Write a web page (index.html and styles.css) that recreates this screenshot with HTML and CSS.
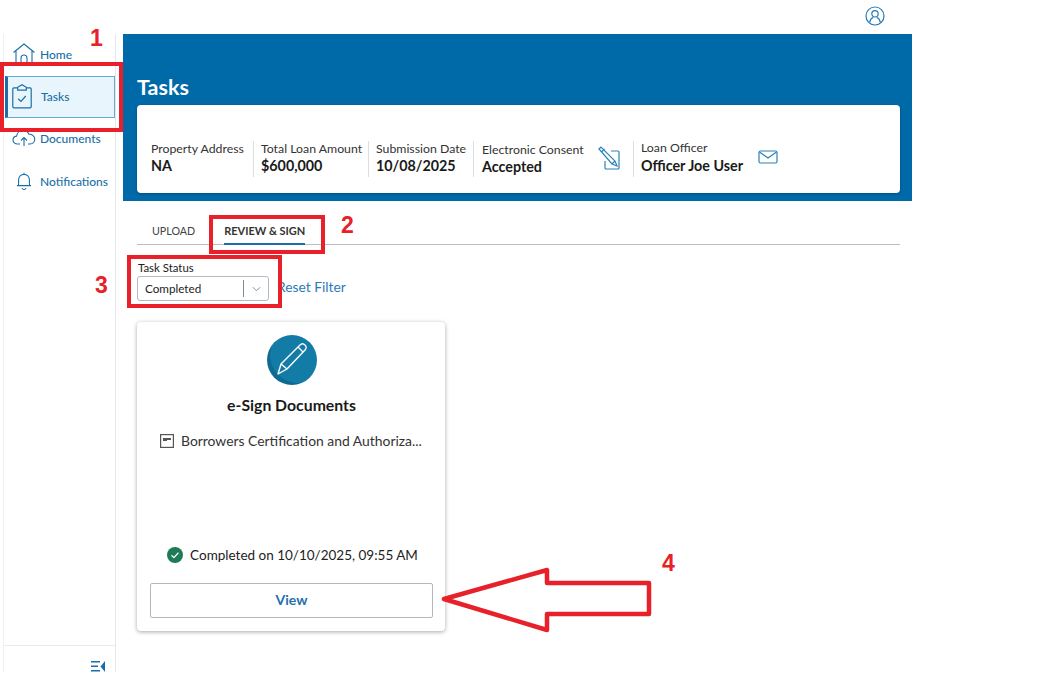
FILE: index.html
```html
<!DOCTYPE html>
<html lang="en">
<head>
    <meta charset="UTF-8">
    <meta name="viewport" content="width=device-width, initial-scale=1.0">
    <title>Tasks</title>
    <link rel="stylesheet" href="styles.css">
</head>
<body>
    <div class="app">
        <header class="topbar">
            <svg class="user-icon" viewBox="0 0 20 20" fill="none" stroke="#2a7ab8" stroke-width="1.2">
                <circle cx="10" cy="10" r="9"/>
                <circle cx="10" cy="7.8" r="3.2"/>
                <path d="M4.6 16.6c.4-3 2.4-4.8 3.6-5.4M15.4 16.6c-.4-3-2.4-4.8-3.6-5.4"/>
            </svg>
        </header>
        <div class="shell">
            <nav class="sidebar">
                <div class="nav-list">
                    <a class="nav-item nav-home">
                        <svg class="nav-icon" viewBox="0 0 24 24" fill="none" stroke="#1b6fa8" stroke-width="1.1">
                            <path d="M1.5 10.5 12 2l10.5 8.5M4 9v13h16V9M9 22v-6a3 3 0 0 1 6 0v6"/>
                        </svg>
                        <span>Home</span>
                    </a>
                    <a class="nav-item active">
                        <svg class="nav-icon" viewBox="0 0 24 24" fill="none" stroke="#1b6fa8" stroke-width="1.1">
                            <path d="M8 4.500H4.500a1 1 0 0 0-1 1V22a1 1 0 0 0 1 1h15a1 1 0 0 0 1-1V5.500a1 1 0 0 0-1-1H16M8 6.500V4l4-2.500L16 4v2.500z"/>
                            <path d="m8.500 14.500 2.500 2.500 4.500-5"/>
                        </svg>
                        <span>Tasks</span>
                    </a>
                    <a class="nav-item nav-docs">
                        <svg class="nav-icon" viewBox="0 0 24 18" fill="none" stroke="#1b6fa8" stroke-width="1.1">
                            <path d="M8 15H5.500C3 15 1 13.200 1 11s1.600-3.700 3.600-3.900C5 3.800 7.700 1.500 11 1.500c2.700 0 5 1.500 6 3.800 3-.2 5.800 2 5.800 5 0 2.700-2 4.700-4.800 4.700H16"/>
                            <path d="M12 17V9M9 11.500 12 8.500l3 3"/>
                        </svg>
                        <span>Documents</span>
                    </a>
                    <a class="nav-item nav-bell">
                        <svg class="nav-icon" viewBox="0 0 24 24" fill="none" stroke="#1b6fa8" stroke-width="1.300">
                            <path d="M5.500 17v-6.500a6.500 6.500 0 0 1 13 0V17M3.500 17.500h17M9.500 20.500a2.700 2.700 0 0 0 5 0M12 2v2"/>
                        </svg>
                        <span>Notifications</span>
                    </a>
                </div>
                <div class="sidebar-foot">
                    <svg class="collapse-icon" viewBox="0 0 14 11" fill="#1b6fa8">
                        <path d="M0 0h9v1.600H0zM0 4.500h7v1.600H0zM0 9h9v1.600H0zM14 0v11L9.500 5.500z"/>
                    </svg>
                </div>
            </nav>
            <main class="content">
                <section class="hero">
                    <h1>Tasks</h1>
                    <div class="summary">
                        <div class="info info-address">
                            <span class="info-label">Property Address</span>
                            <strong>NA</strong>
                        </div>
                        <div class="info info-amount">
                            <span class="info-label">Total Loan Amount</span>
                            <strong>$600,000</strong>
                        </div>
                        <div class="info info-date">
                            <span class="info-label">Submission Date</span>
                            <strong>10/08/2025</strong>
                        </div>
                        <div class="info info-consent">
                            <span class="info-label">Electronic Consent</span>
                            <strong>Accepted</strong>
                            <svg class="info-icon" viewBox="0 0 22 24" fill="none" stroke="#2a82b8" stroke-width="1.2">
                                <path d="M13 5h7a1 1 0 0 1 1 1v16a1 1 0 0 1-1 1H8a1 1 0 0 1-1-1v-7"/>
                                <path d="M1 3 3 1l14 14 2 5-5-2zM3.500 6l3-3M14 18l3-3"/>
                            </svg>
                        </div>
                        <div class="info info-officer">
                            <span class="info-label">Loan Officer</span>
                            <strong>Officer Joe User</strong>
                            <svg class="info-icon mail" viewBox="0 0 20 14" fill="none" stroke="#2a82b8" stroke-width="1.2">
                                <rect x="1" y="1" width="18" height="12" rx="1.500"/>
                                <path d="m1.500 2 8.500 6 8.500-6"/>
                            </svg>
                        </div>
                    </div>
                </section>

                <div class="tabs">
                    <span class="tab">UPLOAD</span>
                    <span class="tab tab-active">REVIEW &amp; SIGN</span>
                </div>

                <div class="filters">
                    <div class="field">
                        <label class="field-label">Task Status</label>
                        <div class="select">
                            <span class="select-value">Completed</span>
                            <span class="select-arrow">
                                <svg viewBox="0 0 10 6" fill="none" stroke="#4f8ebb" stroke-width="1"><path d="m1 1 4 4 4-4"/></svg>
                            </span>
                        </div>
                    </div>
                    <a class="reset">Reset Filter</a>
                </div>

                <article class="task-card">
                    <div class="task-badge">
                        <svg viewBox="0 0 50 50" fill="none" stroke="#fff" stroke-width="1.400" stroke-linejoin="round">
                            <path d="M11 39 14 29 33 10c1.500-1.500 3.500-1.500 5 0s1.500 3.500 0 5L20 34z"/>
                            <path d="m31 12 5 5M14 29l6 5"/>
                        </svg>
                    </div>
                    <h2>e-Sign Documents</h2>
                    <div class="doc-row">
                        <svg class="doc-icon" viewBox="0 0 14 14" fill="none" stroke="#555" stroke-width="1.200">
                            <rect x=".6" y=".6" width="12.800" height="12.800"/>
                            <path d="M3 4h8v2H7v1H3z" fill="#555" stroke="none"/>
                        </svg>
                        <span class="doc-name">Borrowers Certification and Authoriza...</span>
                    </div>
                    <div class="task-status">
                        <svg class="check" viewBox="0 0 16 16">
                            <circle cx="8" cy="8" r="8" fill="#1f7a58"/>
                            <path d="m4.500 8.200 2.400 2.400 4.500-4.800" fill="none" stroke="#fff" stroke-width="1.300"/>
                        </svg>
                        <span>Completed on 10/10/2025, 09:55 AM</span>
                    </div>
                    <button class="view-btn">View</button>
                </article>
            </main>
        </div>

        <!-- red callouts drawn over the page -->
        <div class="mark mark-tasks"></div>
        <div class="mark mark-review"></div>
        <div class="mark mark-status"></div>
        <span class="mark-num num-1">1</span>
        <span class="mark-num num-2">2</span>
        <span class="mark-num num-3">3</span>
        <span class="mark-num num-4">4</span>
        <svg class="mark-arrow" viewBox="0 0 212 66" fill="none" stroke="#e8202a" stroke-width="4.500" stroke-linejoin="round">
            <path d="M3 32 106 3v13h102v31H106v16z"/>
        </svg>
    </div>
</body>
</html>
```

FILE: styles.css
```css
* {
    box-sizing: border-box;
}
body {
    margin: 0;
    background-color: #fff;
    font-family: Lato, "Open Sans", sans-serif;
    color: #1d1d1d;
}
.app {
    position: relative;
    width: 1044px;
    height: 689px;
    overflow: hidden;
}
.topbar {
    display: flex;
    justify-content: flex-end;
    align-items: flex-start;
    width: 912px;
    height: 34px;
    padding: 6px 27px 0 0;
}
.user-icon {
    width: 20px;
    height: 20px;
}
.shell {
    display: flex;
    width: 909px;
    height: 638px;
    margin-left: 3px;
    gap: 7px;
}

/* sidebar */
.sidebar {
    display: flex;
    flex-direction: column;
    width: 113px;
    border-left: 1px solid #eef1f4;
    border-right: 1px solid #e4e8eb;
}
.nav-list {
    flex: 1;
    padding-top: 8px;
}
.nav-item {
    display: flex;
    align-items: center;
    gap: 4px;
    height: 42px;
    padding-left: 8px;
    font-size: 12px;
    font-weight: 500;
    color: #1b6fa8;
}
.nav-icon {
    flex: none;
    width: 24px;
    height: 24px;
}
.nav-home {
    height: 24px;
    margin-bottom: 10px;
}
.nav-item.active {
    margin-left: 1px;
    padding: 0 0 2px 1px;
    gap: 6px;
    border: 1px solid #62a9d6;
    border-left: 3px solid #1b6fa8;
    background-color: #e9f5fc;
}
.active .nav-icon {
    width: 26px;
    height: 26px;
}
.nav-docs {
    padding-bottom: 2px;
}
.nav-docs .nav-icon {
    height: 18px;
}
.nav-bell {
    padding-left: 10px;
    gap: 6px;
}
.nav-bell .nav-icon {
    width: 20px;
    height: 20px;
}
.sidebar-foot {
    display: flex;
    justify-content: flex-end;
    align-items: flex-end;
    height: 27px;
    padding: 0 10px 0 0;
    border-top: 1px solid #e9ecee;
}
.collapse-icon {
    width: 14px;
    height: 11px;
}

/* main column */
.content {
    width: 789px;
}
.hero {
    height: 167px;
    padding: 41px 12px 8px 14px;
    background-color: #0069a7;
}
.hero h1 {
    margin: 0 0 5px;
    font-size: 21.500px;
    line-height: 25px;
    font-weight: 700;
    color: #fff;
}
.summary {
    display: flex;
    align-items: flex-end;
    height: 88px;
    padding: 0 14px 16px;
    border-radius: 4px;
    background-color: #fff;
    box-shadow: 0 1px 3px rgba(0, 0, 0, 0.25);
}
.info {
    position: relative;
    display: flex;
    flex-direction: column;
    height: 36px;
    padding: 0 0 0 7px;
    border-left: 1px solid #dcdfe2;
    font-size: 12.300px;
    white-space: nowrap;
}
.info-label {
    line-height: 16px;
    color: #333;
}
.info strong {
    font-size: 14.300px;
    line-height: 17px;
    font-weight: 700;
    color: #1a1a1a;
}
.info-address {
    width: 102px;
    padding-left: 0;
    border-left: 0;
}
.info-amount {
    width: 115px;
}
.info-date {
    width: 105px;
}
.info-consent {
    width: 160px;
    padding: 1px 0 0 8px;
}
.info-officer .info-label {
    margin: -1px 0 1px;
}
.info-icon {
    position: absolute;
    top: 5px;
    left: 124px;
    width: 22px;
    height: 24px;
}
.info-icon.mail {
    top: 9px;
    left: 124px;
    width: 20px;
    height: 14px;
}

/* tabs */
.tabs {
    display: flex;
    align-items: flex-start;
    gap: 29px;
    height: 44px;
    margin: 0 12px 0 14px;
    padding: 22px 0 0 15px;
    border-bottom: 1px solid #b9bec3;
    font-size: 10.700px;
    color: #444;
}
.tab {
    height: 22px;
    line-height: 16px;
}
.tab-active {
    font-size: 11px;
    font-weight: 700;
    color: #333;
    border-bottom: 2px solid #1b6fa8;
}

/* filter */
.filters {
    display: flex;
    align-items: flex-end;
    gap: 8px;
    margin: 15px 0 0 14px;
}
.field-label {
    display: block;
    margin: 0 0 1px 1px;
    font-size: 11.400px;
    line-height: 15px;
    color: #222;
}
.select {
    display: flex;
    align-items: center;
    width: 132px;
    height: 25px;
    padding-left: 7px;
    border: 1px solid #b5bac0;
    border-radius: 3px;
    font-size: 11.700px;
}
.select-value {
    width: 98px;
    margin-bottom: 1px;
}
.select-arrow {
    display: flex;
    align-items: center;
    justify-content: center;
    flex: 1;
    height: 17px;
    border-left: 1px solid #888;
}
.select-arrow svg {
    width: 9px;
    height: 6px;
}
.reset {
    margin-bottom: 5px;
    font-size: 13.800px;
    line-height: 18px;
    color: #2a7ab8;
}

/* task card */
.task-card {
    display: flex;
    flex-direction: column;
    width: 308px;
    height: 309px;
    margin: 21px 0 0 14px;
    padding: 13px 12px 13px 13px;
    border-radius: 4px;
    background-color: #fff;
    box-shadow: 0 1px 4px rgba(0, 0, 0, 0.35);
}
.task-badge {
    align-self: center;
    width: 50px;
    height: 50px;
    border-radius: 50%;
    background: radial-gradient(circle at 62% 40%, #127ba6 0 64%, #0e6a90 65%);
}
.task-badge svg {
    display: block;
}
.task-card h2 {
    margin: 10px 0 0;
    font-size: 15.800px;
    line-height: 20px;
    font-weight: 700;
    text-align: center;
    color: #1a1a1a;
}
.doc-row {
    display: flex;
    align-items: center;
    gap: 7px;
    margin: 16px 0 0 10px;
    font-size: 13.900px;
    line-height: 20px;
    color: #333;
    white-space: nowrap;
}
.doc-icon {
    flex: none;
    width: 14px;
    height: 14px;
}
.task-status {
    display: flex;
    align-items: center;
    justify-content: center;
    gap: 7px;
    margin-top: auto;
    padding-left: 2px;
    font-size: 13.500px;
    line-height: 20px;
    color: #222;
}
.check {
    width: 16px;
    height: 16px;
}
.view-btn {
    height: 35px;
    margin-top: 18px;
    padding-bottom: 3px;
    border: 1px solid #b3b8c0;
    border-radius: 2px;
    background-color: #fff;
    font-family: inherit;
    font-size: 14px;
    font-weight: 700;
    color: #1f70ad;
}

/* callouts */
.mark {
    position: absolute;
    border: 4px solid #e8202a;
}
.mark-tasks {
    left: 0;
    top: 62px;
    width: 123px;
    height: 70px;
}
.mark-review {
    left: 209px;
    top: 215px;
    width: 116px;
    height: 39px;
}
.mark-status {
    left: 127px;
    top: 255px;
    width: 155px;
    height: 53px;
}
.mark-num {
    position: absolute;
    font-family: "Liberation Sans", sans-serif;
    font-size: 23px;
    line-height: 24px;
    font-weight: 700;
    color: #e8202a;
}
.num-1 { left: 90px; top: 26px; }
.num-2 { left: 341px; top: 213px; }
.num-3 { left: 95px; top: 273px; }
.num-4 { left: 662px; top: 551px; }
.mark-arrow {
    position: absolute;
    left: 441px;
    top: 567px;
    width: 212px;
    height: 66px;
}
```
